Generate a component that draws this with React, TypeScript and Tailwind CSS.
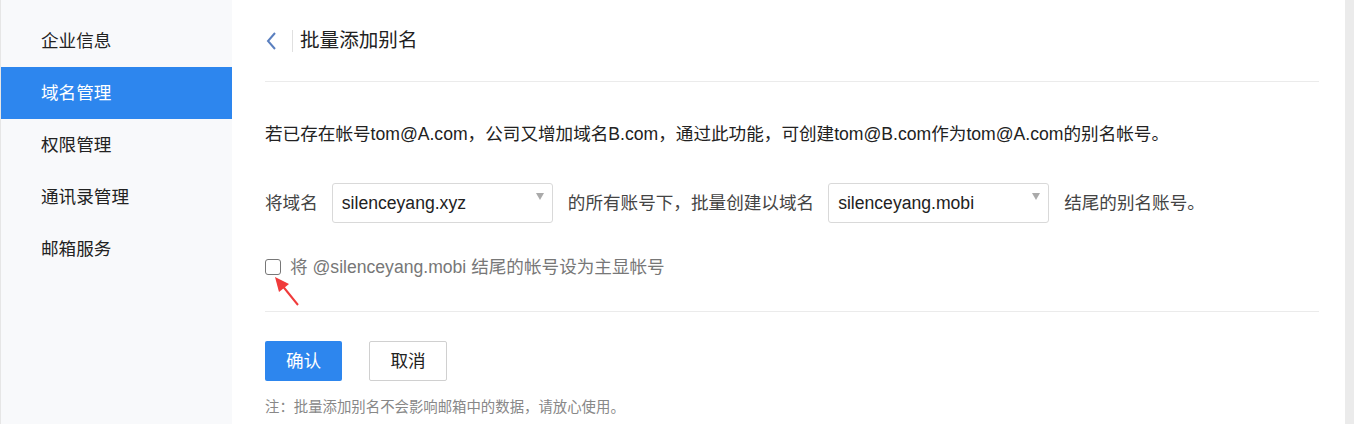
import React from "react";

const font = { fontFamily: '"Liberation Sans", Arial, "Noto Sans CJK SC", sans-serif' };

function Select({ value }: { value: string }) {
  return (
    <div className="relative w-[221px] h-[40px] border border-[#d9d9d9] rounded-[3px] bg-white flex items-center pl-[9px] text-[17.6px] text-[#222]">
      <span>{value}</span>
      <div className="absolute right-[8px] top-[9px] w-0 h-0 border-l-[4px] border-r-[4px] border-t-[7px] border-l-transparent border-r-transparent border-t-[#aaaaaa]" />
    </div>
  );
}

export default function App() {
  const items = ["企业信息", "域名管理", "权限管理", "通讯录管理", "邮箱服务"];
  return (
    <div className="flex w-[1354px] h-[424px] bg-white overflow-hidden" style={font}>
      <div className="w-[1px] bg-[#e6e6e6]" />
      <div className="w-[231px] bg-[#f8f9fb] pt-[15px] flex flex-col">
        {items.map((t, i) => (
          <div
            key={t}
            className={`h-[52px] flex items-center pl-[40px] text-[17.6px] ${i === 1 ? "bg-[#2d86ee] text-white" : "text-[#222]"}`}
          >
            {t}
          </div>
        ))}
      </div>
      <div className="flex-1 pl-[33px] pr-[26px] flex flex-col">
        <div className="h-[82px] border-b border-[#ebebeb] flex items-center">
          <svg width="12" height="20" viewBox="0 0 12 20" className="ml-[1px]">
            <path d="M9 2 L2 10 L9 18" stroke="#5a7fbf" strokeWidth="2" fill="none" />
          </svg>
          <div className="w-[1px] h-[22px] bg-[#e0e0e0] ml-[14px]" />
          <span className="ml-[7px] text-[19.6px] text-[#222]">批量添加别名</span>
        </div>
        <div className="mt-[39px] text-[17.6px] text-[#222] leading-[26px]">
          若已存在帐号tom@A.com，公司又增加域名B.com，通过此功能，可创建tom@B.com作为tom@A.com的别名帐号。
        </div>
        <div className="mt-[36px] flex items-center text-[17.6px] text-[#444]">
          <span>将域名</span>
          <div className="ml-[14px]"><Select value="silenceyang.xyz" /></div>
          <span className="ml-[15px]">的所有账号下，批量创建以域名</span>
          <div className="ml-[14px]"><Select value="silenceyang.mobi" /></div>
          <span className="ml-[15px]">结尾的别名账号。</span>
        </div>
        <div className="relative mt-[33px] flex items-center h-[22px] text-[17.6px] text-[#777]">
          <div className="w-[16px] h-[16px] border border-[#777] rounded-[3px] bg-white" />
          <span className="ml-[9px]">将 @silenceyang.mobi 结尾的帐号设为主显帐号</span>
          <svg className="absolute left-[8px] top-[20px]" width="30" height="32" viewBox="0 0 30 32">
            <line x1="25" y1="29" x2="8" y2="8" stroke="#f03b3b" strokeWidth="2" />
            <polygon points="2,1 16,8 6,16" fill="#f03b3b" />
          </svg>
        </div>
        <div className="mt-[33px] border-b border-[#ebebeb]" />
        <div className="mt-[29px] flex items-center">
          <button className="w-[77px] h-[40px] bg-[#2d86ee] text-white text-[17.6px] rounded-[2px]">确认</button>
          <button className="ml-[27px] w-[78px] h-[40px] bg-white border border-[#d0d0d0] text-[#222] text-[17.6px] rounded-[2px]">取消</button>
        </div>
        <div className="mt-[16px] text-[14.4px] text-[#888]">注：批量添加别名不会影响邮箱中的数据，请放心使用。</div>
      </div>
      <div className="w-[9px] bg-[#ebebeb]" />
    </div>
  );
}
